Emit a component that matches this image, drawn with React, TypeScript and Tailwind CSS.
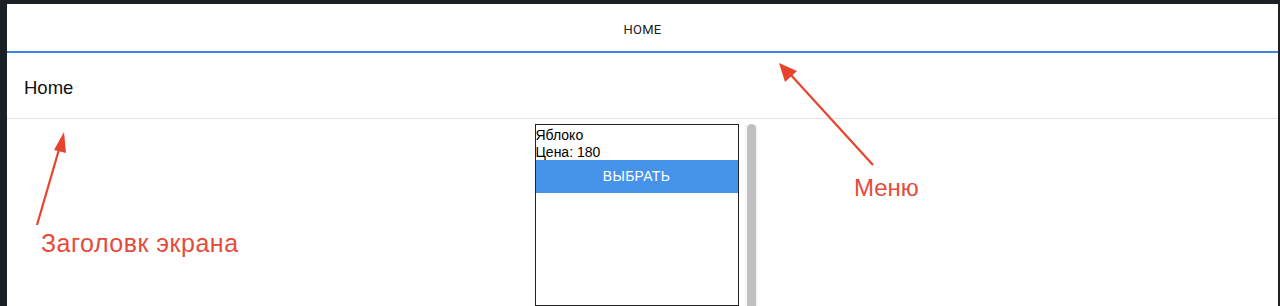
import React from "react";

export default function App() {
  return (
    <div className="relative w-[1280px] h-[306px] overflow-hidden bg-[#1d2025]" style={{ fontFamily: '"Liberation Sans", Arial, sans-serif' }}>
      <div className="flex flex-col h-full pt-[4px] pl-[7px] pr-[2px]">
        <div className="flex flex-col flex-1 bg-white">
          {/* Nav */}
          <div className="h-[47px] pt-[4px] flex items-center justify-center text-[13px] text-[#222] tracking-[0.2px]" style={{ fontFamily: 'Roboto, "Liberation Sans", sans-serif' }}>
            HOME
          </div>
          <div className="h-[2px] bg-[#3f82e0]" />
          {/* Title */}
          <div className="h-[66px] pt-[5px] flex items-center pl-[17px] text-[18.5px] text-[#111] border-b border-[#e2e2e2]">
            Home
          </div>
          {/* Content */}
          <div className="flex-1 flex justify-center pl-[12px] pt-[5px]">
            <div className="flex -translate-x-[3px]">
              <div className="w-[204px] border border-[#222] flex flex-col">
                <div className="text-[14px] leading-[17px] text-black pt-[2px]">Яблоко</div>
                <div className="text-[14px] leading-[16px] text-black">Цена: 180</div>
                <div className="h-[33px] bg-[#4694ea] text-white text-[14px] flex items-center justify-center tracking-[0.3px]">
                  ВЫБРАТЬ
                </div>
              </div>
              <div className="ml-[6px] w-[12px] border-x border-[#f0f0f0] flex pl-[1px]">
                <div className="w-[9px] h-full rounded-t-full bg-[#c0c0c0]" />
              </div>
            </div>
          </div>
        </div>
      </div>

      {/* Annotations */}
      <svg className="absolute left-0 top-0" width="1280" height="306" viewBox="0 0 1280 306">
        <line x1="37" y1="225" x2="60" y2="146" stroke="#e8432d" strokeWidth="2.2" />
        <polygon points="64,132 54,150 66,153" fill="#e8432d" />
        <line x1="873" y1="165" x2="790" y2="74" stroke="#e8432d" strokeWidth="2.2" />
        <polygon points="779,63 785,82 797,71" fill="#e8432d" />
      </svg>
      <div className="absolute left-[41px] top-[228px] text-[25px] leading-[30px] tracking-[0.5px] text-[#e54b3c]">Заголовк экрана</div>
      <div className="absolute left-[854px] top-[173px] text-[24px] leading-[30px] text-[#e54b3c]">Меню</div>
    </div>
  );
}
